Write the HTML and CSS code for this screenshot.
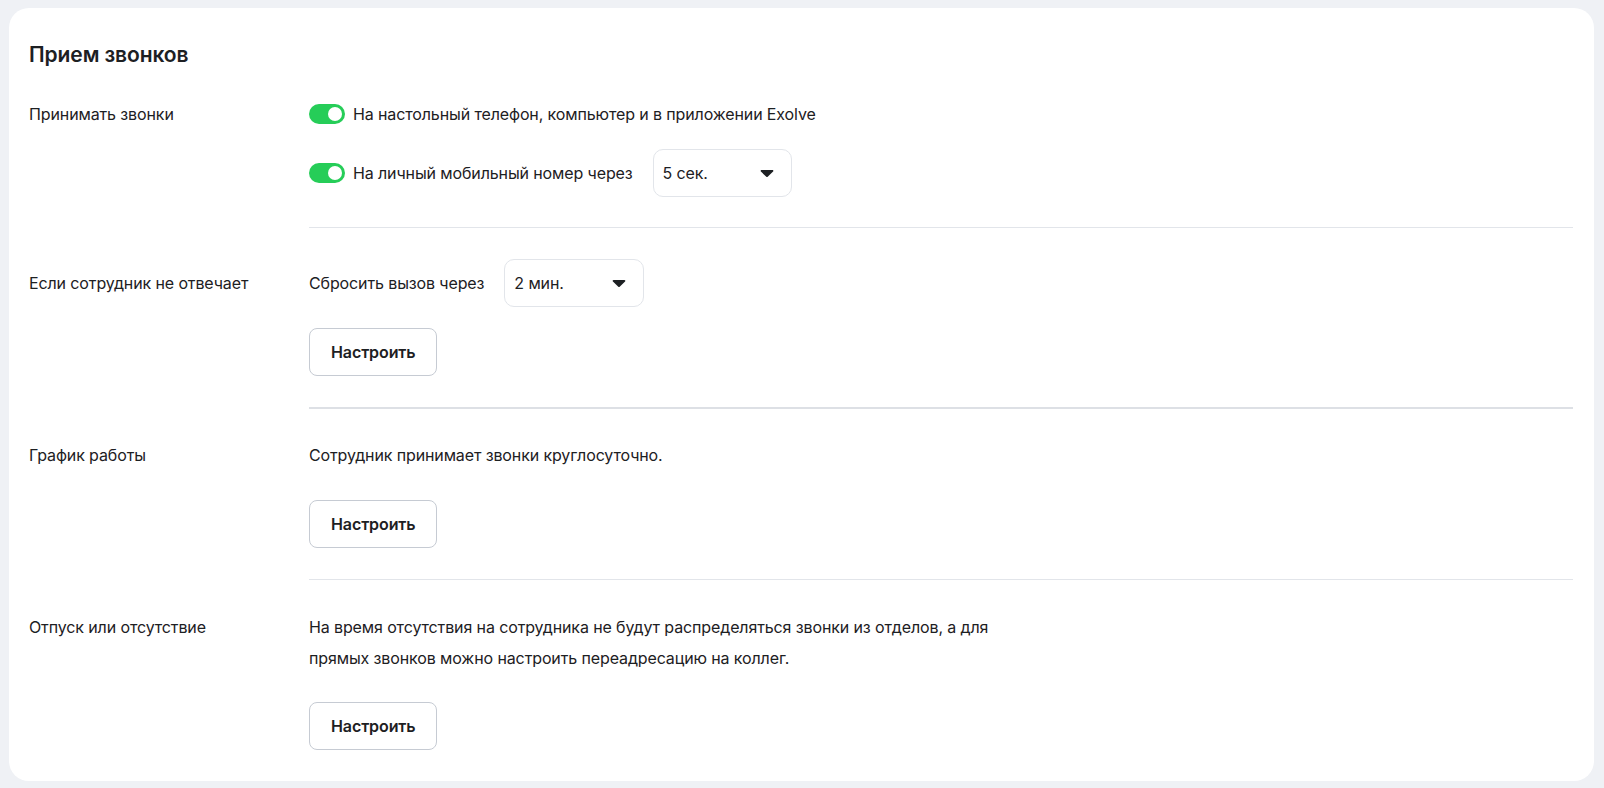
FILE: index.html
```html
<!DOCTYPE html>
<html lang="ru">
<head>
<meta charset="utf-8">
<title>Прием звонков</title>
<link rel="stylesheet" href="styles.css">
</head>
<body>
<div class="card">
  <h2 class="title">Прием звонков</h2>
  <div class="settings">
    <div class="label">Принимать звонки</div>
    <div class="content content--first">
      <div class="row">
        <span class="toggle"><span class="knob"></span></span>
        <span class="text">На настольный телефон, компьютер и в приложении Exolve</span>
      </div>
      <div class="row row--select">
        <span class="toggle"><span class="knob"></span></span>
        <span class="text">На личный мобильный номер через</span>
        <div class="select">
          <span>5 сек.</span>
          <svg class="arrow" width="14" height="9" viewBox="0 0 14 9"><path d="M1.6 1h10.8c.9 0 1.3 1 .7 1.6L7.7 7.7c-.4.4-1 .4-1.4 0L.9 2.6C.3 2 .7 1 1.6 1z" fill="#1d2023"/></svg>
        </div>
      </div>
    </div>

    <div class="label label--tall">Если сотрудник не отвечает</div>
    <div class="content content--thick">
      <div class="row row--select row--plain">
        <span class="text">Сбросить вызов через</span>
        <div class="select select--wide">
          <span>2 мин.</span>
          <svg class="arrow" width="14" height="9" viewBox="0 0 14 9"><path d="M1.6 1h10.8c.9 0 1.3 1 .7 1.6L7.7 7.7c-.4.4-1 .4-1.4 0L.9 2.6C.3 2 .7 1 1.6 1z" fill="#1d2023"/></svg>
        </div>
      </div>
      <button class="btn">Настроить</button>
    </div>

    <div class="label">График работы</div>
    <div class="content">
      <p class="para">Сотрудник принимает звонки круглосуточно.</p>
      <button class="btn btn--gap">Настроить</button>
    </div>

    <div class="label label--last">Отпуск или отсутствие</div>
    <div class="content content--last">
      <p class="para para--narrow">На время отсутствия на сотрудника не будут распределяться звонки из отделов, а для прямых звонков можно настроить переадресацию на коллег.</p>
      <button class="btn btn--gap-sm">Настроить</button>
    </div>
  </div>
</div>
</body>
</html>
```

FILE: styles.css
```css
* { box-sizing: border-box; }
html, body { margin: 0; padding: 0; }
body {
  background: #eff1f5;
  font-family: Inter, "Noto Sans", sans-serif;
  color: #1d2023;
  padding: 8px 10px 7px 9px;
}
.card {
  background: #fff;
  border-radius: 20px;
  padding: 33px 21px 0 20px;
  height: 773px;
}
.title {
  margin: 0 0 30px;
  font-size: 21px;
  line-height: 28px;
  font-weight: 600;
  letter-spacing: -0.1px;
}
.settings {
  display: grid;
  grid-template-columns: 280px 1fr;
  font-size: 16px;
  letter-spacing: -0.12px;
}
.label {
  line-height: 30px;
  padding-top: 31px;
}
.settings > .label:first-child { padding-top: 0; }
.label--tall { line-height: 48px; }
.label--last { padding-top: 32px; line-height: 31px; }
.content {
  display: flex;
  flex-direction: column;
  align-items: flex-start;
  gap: 20px;
  padding: 31px 0 31px;
  border-bottom: 1px solid #e2e5ea;
}
.content--first { padding: 0 0 30px; }
.content--thick { border-bottom-width: 2px; border-bottom-color: #dde0e5; gap: 21px; }
.content--last { border-bottom: 0; padding: 32px 0 0; }
.row {
  display: flex;
  align-items: center;
  height: 30px;
}
.row--select { height: 48px; }
.toggle {
  width: 36px;
  height: 20px;
  border-radius: 10px;
  background: #26cd58;
  position: relative;
  margin-right: 8px;
  flex: none;
}
.knob {
  position: absolute;
  right: 3px;
  top: 3px;
  width: 14px;
  height: 14px;
  border-radius: 50%;
  background: #fff;
}
.text { white-space: nowrap; }
.select {
  margin-left: 20px;
  width: 139px;
  height: 48px;
  border: 1px solid #e2e5ea;
  border-radius: 10px;
  display: flex;
  align-items: center;
  justify-content: space-between;
  padding: 0 17px 0 9px;
}
.select--wide { width: 140px; }
.arrow { display: block; }
.btn {
  font-family: inherit;
  font-size: 16px;
  font-weight: 600;
  letter-spacing: -0.1px;
  color: #1d2023;
  background: #fff;
  border: 1px solid #c6cbd3;
  border-radius: 8px;
  height: 48px;
  padding: 0 21px;
}
.para {
  margin: 0;
  line-height: 30px;
}
.para--narrow { max-width: 690px; line-height: 31px; }
.btn--gap { margin-top: 10px; }
.btn--gap-sm { margin-top: 8px; }
```
